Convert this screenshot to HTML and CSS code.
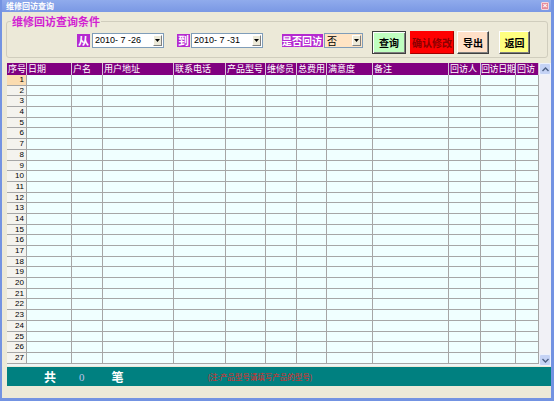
FILE: index.html
```html
<!DOCTYPE html>
<html lang="zh">
<head>
<meta charset="utf-8">
<title>维修回访查询</title>
<link rel="stylesheet" href="styles.css">
</head>
<body>
<div class="window">
  <div class="titlebar">
    <span class="title">维修回访查询</span>
    <span class="close">×</span>
  </div>
  <div class="client">
    <fieldset class="group">
      <legend class="legend">维修回访查询条件</legend>
      <div class="controls">
        <span class="tag tag-from">从</span>
        <div class="combo date"><span class="val">2010- 7 -26</span><span class="drop"><svg width="5" height="3" viewBox="0 0 5 3"><path d="M0 0H5L2.5 3Z" fill="#000"/></svg></span></div>
        <span class="tag tag-to">到</span>
        <div class="combo date"><span class="val">2010- 7 -31</span><span class="drop"><svg width="5" height="3" viewBox="0 0 5 3"><path d="M0 0H5L2.5 3Z" fill="#000"/></svg></span></div>
        <span class="tag tag-visit">是否回访</span>
        <div class="combo yn"><span class="val">否</span><span class="drop"><svg width="5" height="3" viewBox="0 0 5 3"><path d="M0 0H5L2.5 3Z" fill="#000"/></svg></span></div>
        <button class="btn btn-query">查询</button>
        <button class="btn btn-confirm">确认修改</button>
        <button class="btn btn-export">导出</button>
        <button class="btn btn-back">返回</button>
      </div>
    </fieldset>

    <div class="grid">
      <div class="cols">
        <div class="row head">
          <span>序号</span><span>日期</span><span>户名</span><span>用户地址</span><span>联系电话</span><span>产品型号</span><span>维修员</span><span>总费用</span><span>满意度</span><span>备注</span><span>回访人</span><span class="tight">回访日期</span><span>回访</span>
        </div>
        <div class="row"><span class="rn cur">1</span><span></span><span></span><span></span><span></span><span></span><span></span><span></span><span></span><span></span><span></span><span></span><span></span></div>
        <div class="row"><span class="rn">2</span><span></span><span></span><span></span><span></span><span></span><span></span><span></span><span></span><span></span><span></span><span></span><span></span></div>
        <div class="row"><span class="rn">3</span><span></span><span></span><span></span><span></span><span></span><span></span><span></span><span></span><span></span><span></span><span></span><span></span></div>
        <div class="row"><span class="rn">4</span><span></span><span></span><span></span><span></span><span></span><span></span><span></span><span></span><span></span><span></span><span></span><span></span></div>
        <div class="row"><span class="rn">5</span><span></span><span></span><span></span><span></span><span></span><span></span><span></span><span></span><span></span><span></span><span></span><span></span></div>
        <div class="row"><span class="rn">6</span><span></span><span></span><span></span><span></span><span></span><span></span><span></span><span></span><span></span><span></span><span></span><span></span></div>
        <div class="row"><span class="rn">7</span><span></span><span></span><span></span><span></span><span></span><span></span><span></span><span></span><span></span><span></span><span></span><span></span></div>
        <div class="row"><span class="rn">8</span><span></span><span></span><span></span><span></span><span></span><span></span><span></span><span></span><span></span><span></span><span></span><span></span></div>
        <div class="row"><span class="rn">9</span><span></span><span></span><span></span><span></span><span></span><span></span><span></span><span></span><span></span><span></span><span></span><span></span></div>
        <div class="row"><span class="rn">10</span><span></span><span></span><span></span><span></span><span></span><span></span><span></span><span></span><span></span><span></span><span></span><span></span></div>
        <div class="row"><span class="rn">11</span><span></span><span></span><span></span><span></span><span></span><span></span><span></span><span></span><span></span><span></span><span></span><span></span></div>
        <div class="row"><span class="rn">12</span><span></span><span></span><span></span><span></span><span></span><span></span><span></span><span></span><span></span><span></span><span></span><span></span></div>
        <div class="row"><span class="rn">13</span><span></span><span></span><span></span><span></span><span></span><span></span><span></span><span></span><span></span><span></span><span></span><span></span></div>
        <div class="row"><span class="rn">14</span><span></span><span></span><span></span><span></span><span></span><span></span><span></span><span></span><span></span><span></span><span></span><span></span></div>
        <div class="row"><span class="rn">15</span><span></span><span></span><span></span><span></span><span></span><span></span><span></span><span></span><span></span><span></span><span></span><span></span></div>
        <div class="row"><span class="rn">16</span><span></span><span></span><span></span><span></span><span></span><span></span><span></span><span></span><span></span><span></span><span></span><span></span></div>
        <div class="row"><span class="rn">17</span><span></span><span></span><span></span><span></span><span></span><span></span><span></span><span></span><span></span><span></span><span></span><span></span></div>
        <div class="row"><span class="rn">18</span><span></span><span></span><span></span><span></span><span></span><span></span><span></span><span></span><span></span><span></span><span></span><span></span></div>
        <div class="row"><span class="rn">19</span><span></span><span></span><span></span><span></span><span></span><span></span><span></span><span></span><span></span><span></span><span></span><span></span></div>
        <div class="row"><span class="rn">20</span><span></span><span></span><span></span><span></span><span></span><span></span><span></span><span></span><span></span><span></span><span></span><span></span></div>
        <div class="row"><span class="rn">21</span><span></span><span></span><span></span><span></span><span></span><span></span><span></span><span></span><span></span><span></span><span></span><span></span></div>
        <div class="row"><span class="rn">22</span><span></span><span></span><span></span><span></span><span></span><span></span><span></span><span></span><span></span><span></span><span></span><span></span></div>
        <div class="row"><span class="rn">23</span><span></span><span></span><span></span><span></span><span></span><span></span><span></span><span></span><span></span><span></span><span></span><span></span></div>
        <div class="row"><span class="rn">24</span><span></span><span></span><span></span><span></span><span></span><span></span><span></span><span></span><span></span><span></span><span></span><span></span></div>
        <div class="row"><span class="rn">25</span><span></span><span></span><span></span><span></span><span></span><span></span><span></span><span></span><span></span><span></span><span></span><span></span></div>
        <div class="row"><span class="rn">26</span><span></span><span></span><span></span><span></span><span></span><span></span><span></span><span></span><span></span><span></span><span></span><span></span></div>
        <div class="row"><span class="rn">27</span><span></span><span></span><span></span><span></span><span></span><span></span><span></span><span></span><span></span><span></span><span></span><span></span></div>
      </div>
      <div class="vscroll">
        <span class="sbtn"><svg width="7" height="5" viewBox="0 0 7 5"><path d="M0.5 4L3.5 1L6.5 4" fill="none" stroke="#4d6185" stroke-width="1.4"/></svg></span>
        <span class="track"></span>
        <span class="sbtn"><svg width="7" height="5" viewBox="0 0 7 5"><path d="M0.5 1L3.5 4L6.5 1" fill="none" stroke="#4d6185" stroke-width="1.4"/></svg></span>
      </div>
    </div>

    <div class="footer">
      <span class="f-gong">共</span>
      <span class="f-count">0</span>
      <span class="f-bi">笔</span>
      <span class="f-note">(注:产品型号请填写产品的型号)</span>
    </div>
  </div>
</div>
</body>
</html>
```

FILE: styles.css
```css
* { box-sizing: border-box; }
html, body { margin: 0; padding: 0; }
body {
  width: 554px;
  height: 401px;
  overflow: hidden;
  font-family: "Noto Sans CJK SC", "Liberation Sans", sans-serif;
}
.window {
  width: 554px;
  height: 401px;
  background: #7393e2;
  padding: 0 3px 3px 2px;
  display: flex;
  flex-direction: column;
}
.titlebar {
  height: 12px;
  display: flex;
  align-items: center;
  justify-content: space-between;
  padding: 0 2px 0 4px;
  background: linear-gradient(#90abec, #7a98e4);
}
.title {
  color: #fff;
  font-size: 8px;
  line-height: 10px;
  font-weight: bold;
}
.close {
  width: 8px;
  height: 8px;
  background: #e58a9a;
  border: 1px solid #f4d4dc;
  border-radius: 1px;
  color: #fff;
  font-family: "Liberation Sans", sans-serif;
  font-size: 8px;
  line-height: 6px;
  text-align: center;
  font-weight: bold;
}
.client {
  flex: 1;
  background: #ece9d8;
  display: flex;
  flex-direction: column;
  padding: 0 0 11px 0;
}
.group {
  margin: 3px 3px 0 4px;
  padding: 0;
  border: 1px solid #d0cdbd;
  border-radius: 3px;
  min-width: 0;
}
.legend {
  padding: 0 1px;
  margin-left: 4px;
  font-size: 11px;
  line-height: 13px;
  font-weight: bold;
  color: #d21fd2;
}
.controls {
  display: flex;
  align-items: flex-start;
  height: 29px;
  padding-left: 70px;
}
.tag {
  margin-top: 6px;
  height: 13px;
  background: #b52ad0;
  color: #fff;
  font-size: 11px;
  line-height: 13px;
  font-weight: bold;
  padding: 0 1px;
}
.tag-to { margin-left: 13px; }
.tag-visit {
  margin-left: 19px;
  font-size: 10px;
  padding: 0;
  width: 41px;
}
.combo {
  margin-top: 5px;
  height: 15px;
  display: flex;
  align-items: center;
  justify-content: space-between;
  background: #fff;
  border: 1px solid #7f9db9;
  padding: 0 1px 0 2px;
}
.combo.date { width: 72px; margin-left: 2px; }
.tag-to + .combo.date { margin-left: 1px; }
.combo.yn { width: 39px; margin-left: 1px; background: #ffe4c4; }
.val {
  font-size: 9px;
  line-height: 13px;
  color: #000;
  white-space: pre;
  font-family: "Liberation Sans", "Noto Sans CJK SC", sans-serif;
}
.combo.yn .val { font-family: "Noto Sans CJK SC", sans-serif; font-size: 10px; }
.drop {
  width: 9px;
  height: 11px;
  background: #ece9d8;
  border: 1px solid;
  border-color: #fff #808080 #808080 #fff;
  display: flex;
  align-items: center;
  justify-content: center;
}
.btn {
  margin-top: 3px;
  height: 23px;
  padding: 0;
  font-family: "Noto Sans CJK SC", sans-serif;
  font-size: 10px;
  font-weight: bold;
  line-height: 13px;
  color: #000;
  border: 1px solid;
  border-color: #fff #404040 #404040 #fff;
  box-shadow: inset -1px -1px 0 #808080;
}
.btn-query {
  width: 34px;
  margin-left: 9px;
  background: #c0ffc0;
  border-color: #404040;
  box-shadow: inset 1px 1px 0 #fff, inset -1px -1px 0 #808080;
}
.btn-confirm {
  width: 44px;
  margin-left: 4px;
  background: #ff0000;
  color: #8a0000;
  border-color: #ff0000 #a00000 #a00000 #ff0000;
  box-shadow: none;
}
.btn-export {
  width: 32px;
  margin-left: 3px;
  background: #ffe0c8;
}
.btn-back {
  width: 31px;
  margin-left: 10px;
  background: #ffff80;
}
.grid {
  margin: 5px 0 0 5px;
  height: 303px;
  display: flex;
  background: #eef6f6;
}
.cols {
  width: 532px;
  display: flex;
  flex-direction: column;
}
.row {
  display: grid;
  grid-template-columns: 20px 45px 31px 71px 52px 40px 31px 30px 46px 76px 32px 35px 23px;
  height: 10.7px;
  background: #f0ffff;
}
.row > span {
  border-right: 1px solid #a6a6a6;
  border-bottom: 1px solid #a6a6a6;
  overflow: hidden;
  white-space: nowrap;
}
.row.head {
  height: 12px;
  background: #800080;
}
.row.head > span {
  color: #fff;
  font-size: 9px;
  line-height: 12px;
  padding-left: 1px;
  border-right: 1px solid #d8c0d8;
  border-bottom: none;
}
.row.head > span.tight { letter-spacing: -0.4px; padding-left: 0; }
.rn {
  background: #f4f3ee;
  text-align: right;
  padding-right: 2px;
  font-family: "Liberation Sans", sans-serif;
  font-size: 8px;
  line-height: 10px;
  color: #000;
}
.rn.cur { background: #fbdcb0; }
.vscroll {
  width: 12px;
  display: flex;
  flex-direction: column;
  background: #f3f3f8;
}
.sbtn {
  height: 12px;
  background: #c5d3f5;
  border: 1px solid #eef2fc;
  border-radius: 2px;
  display: flex;
  align-items: center;
  justify-content: center;
}
.track { flex: 1; background: #f1f1f6; }
.footer {
  margin: 1px 0 0 5px;
  height: 19px;
  background: #008080;
  display: flex;
  align-items: center;
  padding-left: 37px;
}
.f-gong, .f-bi {
  color: #fff;
  font-size: 12px;
  font-weight: bold;
  font-family: "Noto Sans CJK SC", serif;
}
.f-count {
  margin-left: 23px;
  color: #c0c0e8;
  font-size: 11px;
  font-family: "Liberation Serif", serif;
}
.f-bi { margin-left: 27px; }
.f-note {
  margin-left: 84px;
  color: #e02828;
  font-size: 7.5px;
  letter-spacing: 0;
}
```
